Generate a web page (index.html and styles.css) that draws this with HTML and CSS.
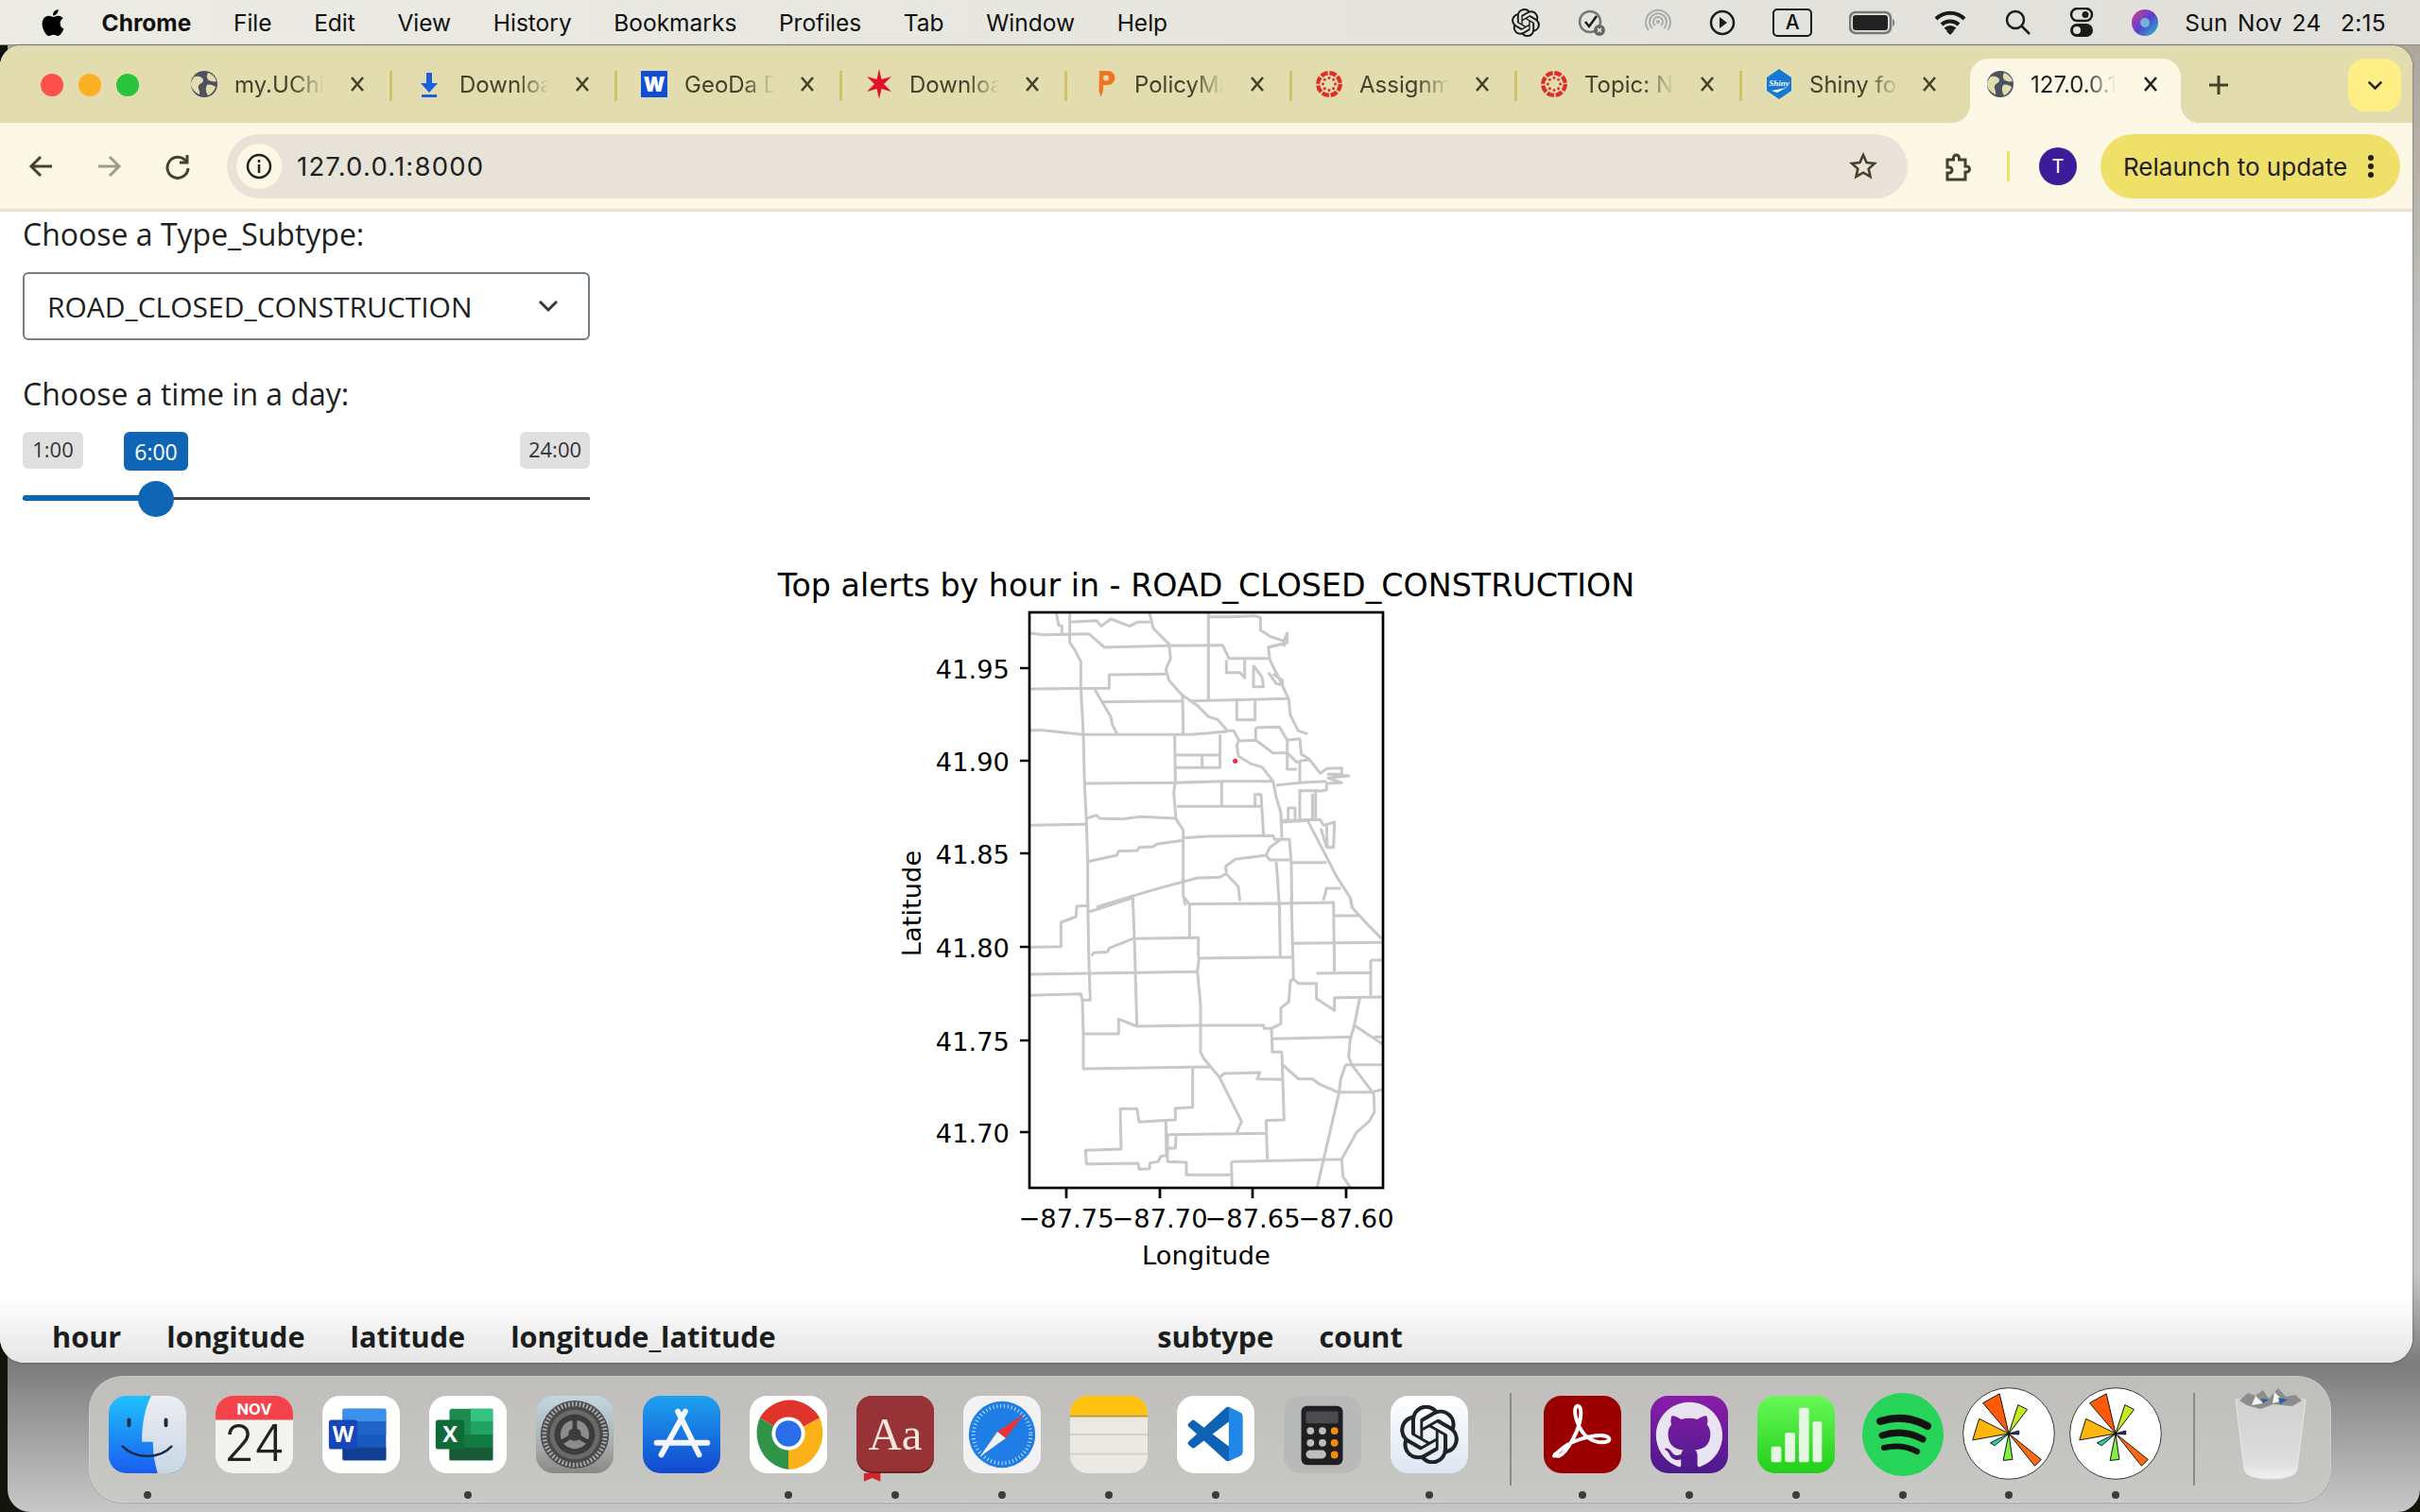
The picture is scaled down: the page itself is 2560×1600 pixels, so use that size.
FILE: index.html
```html
<!DOCTYPE html>
<html lang="en">
<head>
<meta charset="utf-8">
<title>127.0.0.1:8000</title>
<link rel="stylesheet" href="styles.css">
</head>
<body>
<div class="screen">
  <div class="backdrop"></div>
  <header class="menubar">
    <div class="menu-left">
      <svg class="apple" viewBox="0 0 24 24"><path d="M12.152 6.896c-.948 0-2.415-1.078-3.96-1.04-2.04.027-3.91 1.183-4.961 3.014-2.117 3.675-.546 9.103 1.519 12.09 1.013 1.454 2.208 3.09 3.792 3.039 1.52-.065 2.09-.987 3.935-.987 1.831 0 2.35.987 3.96.948 1.637-.026 2.676-1.48 3.676-2.948 1.156-1.688 1.636-3.325 1.662-3.415-.039-.013-3.182-1.221-3.22-4.857-.026-3.04 2.48-4.494 2.597-4.559-1.429-2.09-3.623-2.324-4.39-2.376-2-.156-3.675 1.09-4.61 1.09zM15.53 3.83c.843-1.012 1.4-2.427 1.245-3.83-1.207.052-2.662.805-3.532 1.818-.78.896-1.454 2.338-1.273 3.714 1.338.104 2.715-.688 3.559-1.701"/></svg>
      <span class="menu-app">Chrome</span>
      <span>File</span><span>Edit</span><span>View</span><span>History</span><span>Bookmarks</span><span>Profiles</span><span>Tab</span><span>Window</span><span>Help</span>
    </div>
    <div class="menu-right">
      <svg class="mi mi-30" viewBox="0 0 24 24"><use href="#openai"/></svg>
      <svg class="mi mi-32" viewBox="0 0 32 32"><circle cx="14" cy="15" r="11" class="mi-stroke-grey"/><path d="M9 15l4 5 8-11" class="mi-stroke"/><circle cx="24" cy="24" r="6" fill="#666"/><path d="M22 22l4 4M26 22l-4 4" stroke="#eee" stroke-width="1.5"/></svg>
      <svg class="mi mi-30" viewBox="0 0 30 32"><g class="mi-stroke-faint"><path d="M5 24a13 13 0 1 1 20 0"/><path d="M9 22a9 9 0 1 1 12 0"/><path d="M12 19a5 5 0 1 1 6 0"/></g><circle cx="15" cy="15" r="2" fill="#aaa"/></svg>
      <svg class="mi mi-28" viewBox="0 0 28 28"><circle cx="14" cy="14" r="12" class="mi-stroke"/><path d="M11 8l8 6-8 6z"/></svg>
      <div class="mi-a">A</div>
      <svg class="mi mi-50" viewBox="0 0 50 24"><rect x="1" y="1" width="43" height="22" rx="6" class="mi-stroke-grey"/><rect x="4" y="4" width="37" height="16" rx="3" fill="#222"/><path d="M46 8c3 1 3 7 0 8z" fill="#888"/></svg>
      <svg class="mi mi-36" viewBox="0 0 36 28"><path d="M3 10a21 21 0 0 1 30 0M9 16a13 13 0 0 1 18 0M13 21a7 7 0 0 1 10 0" class="mi-stroke-thick"/><path d="M14 23l4-3 4 3-4 4z"/></svg>
      <svg class="mi mi-30" viewBox="0 0 30 30"><circle cx="12" cy="12" r="9" class="mi-stroke"/><path d="M18 18l9 9" class="mi-stroke"/></svg>
      <svg class="mi mi-26" viewBox="0 0 26 32"><rect x="2" y="1" width="22" height="13" rx="6.5" class="mi-stroke"/><circle cx="17" cy="7.5" r="3.5"/><rect x="1" y="17" width="24" height="14" rx="7"/><circle cx="8" cy="24" r="4" fill="#e2e0da"/></svg>
      <svg class="mi mi-30" viewBox="0 0 30 30"><defs><linearGradient id="siri" x1="0" y1="0" x2="1" y2="1"><stop offset="0" stop-color="#e0408a"/><stop offset=".5" stop-color="#5a3fd0"/><stop offset="1" stop-color="#20c8c0"/></linearGradient></defs><circle cx="15" cy="15" r="14" fill="url(#siri)"/><circle cx="15" cy="15" r="5" fill="#7fe0e0" opacity=".7"/></svg>
      <span class="menu-clock">Sun Nov 24&nbsp;&nbsp;2:15</span>
    </div>
  </header>

  <main class="window">
    <div class="tabstrip">
      <div class="lights"><i class="light red"></i><i class="light amber"></i><i class="light green"></i></div>
      <div class="tab sep">
        <svg class="fav" viewBox="0 0 28 28"><use href="#globe"/></svg><span class="tab-title">my.UChi</span>
        <svg class="tab-x" viewBox="0 0 18 18"><use href="#xmark"/></svg>
      </div>
      <div class="tab sep">
        <svg class="fav" viewBox="0 0 28 28"><path d="M11 2h6v11h6l-9 10-9-10h6z" fill="#1a5fe0"/><rect x="6" y="25" width="16" height="3" fill="#1a5fe0"/></svg><span class="tab-title">Downloa</span>
        <svg class="tab-x" viewBox="0 0 18 18"><use href="#xmark"/></svg>
      </div>
      <div class="tab sep">
        <svg class="fav" viewBox="0 0 32 32"><rect width="32" height="32" fill="#0e4fd6"/><text x="16" y="25" class="fav-w">W</text></svg><span class="tab-title">GeoDa D</span>
        <svg class="tab-x" viewBox="0 0 18 18"><use href="#xmark"/></svg>
      </div>
      <div class="tab sep">
        <svg class="fav" viewBox="0 0 28 32"><path d="M14 0l2.5 11L27 8l-8 8 8 8-10.500-3L14 32l-2.500-11L1 24l8-8-8-8 10.500 3z" fill="#e0102c"/></svg><span class="tab-title">Downloa</span>
        <svg class="tab-x" viewBox="0 0 18 18"><use href="#xmark"/></svg>
      </div>
      <div class="tab sep">
        <svg class="fav" viewBox="0 0 28 32"><path d="M9 2h9a7 7 0 0 1 0 15h-5v6l-2.500 7-2-7z" fill="#f27420"/><circle cx="16" cy="9.500" r="3" fill="#e3dcae"/></svg><span class="tab-title">PolicyMa</span>
        <svg class="tab-x" viewBox="0 0 18 18"><use href="#xmark"/></svg>
      </div>
      <div class="tab sep">
        <svg class="fav" viewBox="0 0 32 32"><use href="#canvas"/></svg><span class="tab-title">Assignm</span>
        <svg class="tab-x" viewBox="0 0 18 18"><use href="#xmark"/></svg>
      </div>
      <div class="tab sep">
        <svg class="fav" viewBox="0 0 32 32"><use href="#canvas"/></svg><span class="tab-title">Topic: N</span>
        <svg class="tab-x" viewBox="0 0 18 18"><use href="#xmark"/></svg>
      </div>
      <div class="tab tab-last">
        <svg class="fav" viewBox="0 0 28 32"><path d="M14 0l13 9v14l-13 9-13-9V9z" fill="#1478d4"/><text x="14" y="18" class="fav-shiny">Shiny</text><path d="M6 23l15-3-9 5z" fill="#fff"/></svg><span class="tab-title">Shiny for</span>
        <svg class="tab-x" viewBox="0 0 18 18"><use href="#xmark"/></svg>
      </div>
      <div class="tab tab-active">
        <svg class="fav" viewBox="0 0 28 28"><use href="#globe"/></svg><span class="tab-title tab-title-active">127.0.0.1</span>
        <svg class="tab-x tab-x-active" viewBox="0 0 18 18"><use href="#xmark"/></svg>
      </div>
      <svg class="newtab" viewBox="0 0 22 22"><path d="M11 1v20M1 11h20"/></svg>
      <div class="tabsearch"><svg class="tabsearch-icon" viewBox="0 0 20 12"><path d="M2 2l8 8 8-8"/></svg></div>
    </div>

    <div class="toolbar">
      <svg class="tool tool-back" viewBox="0 0 28 28"><path d="M25 14H4M13 4L3 14l10 10"/></svg>
      <svg class="tool tool-fwd" viewBox="0 0 28 28"><path d="M3 14h21M15 4l10 10-10 10"/></svg>
      <svg class="tool tool-reload" viewBox="0 0 28 28"><path d="M23 9a11 11 0 1 0 2 7"/><path d="M24 2v8h-8" /></svg>
      <div class="omnibox">
        <div class="site-info"><svg class="site-info-icon" viewBox="0 0 28 28"><circle cx="14" cy="14" r="12"/><path d="M14 12v9M14 7v3"/></svg></div>
        <span class="url">127.0.0.1:8000</span>
        <svg class="star" viewBox="0 0 30 30"><path d="M15 3l3.600 8 8.400.900-6.300 5.700 1.800 8.400L15 21.700 7.500 26l1.800-8.400L3 11.900l8.400-.900z"/></svg>
      </div>
      <svg class="puzzle" viewBox="0 0 32 32"><path d="M6 9h6.500V7a3 3 0 0 1 6 0v2H25v7h1.500a3 3 0 0 1 0 6H25v8H6v-7h2a3 3 0 0 0 0-6H6z"/></svg>
      <i class="toolbar-sep"></i>
      <div class="avatar">T</div>
      <div class="relaunch"><span>Relaunch to update</span><svg class="kebab" viewBox="0 0 6 24"><circle cx="3" cy="3" r="3"/><circle cx="3" cy="12" r="3"/><circle cx="3" cy="21" r="3"/></svg></div>
    </div>

    <section class="page">
      <label class="field-label">Choose a Type_Subtype:</label>
      <div class="select"><span>ROAD_CLOSED_CONSTRUCTION</span><svg class="select-caret" viewBox="0 0 22 14"><path d="M2 2l9 9 9-9"/></svg></div>
      <label class="field-label field-label-time">Choose a time in a day:</label>
      <div class="slider">
        <span class="pill pill-min">1:00</span>
        <span class="pill pill-value">6:00</span>
        <span class="pill pill-max">24:00</span>
        <i class="track"></i><i class="track-fill"></i><i class="handle"></i>
      </div>

      <svg class="chart" viewBox="776 590 1000 770" role="img">
        <defs><clipPath id="axes"><rect x="1089" y="648" width="374" height="609"/></clipPath></defs>
        <text x="1276" y="631" class="chart-title">Top alerts by hour in - ROAD_CLOSED_CONSTRUCTION</text>
        <g clip-path="url(#axes)">
          <g transform="translate(1060 630) scale(.33333)" class="map">
            <path d="M172 55L180 95L190 97L190 125M215 55L215 150L232 175L250 210L250 290L258 440L262 600L268 720L272 850L272 990"/>
            <path d="M90 120L130 125L275 122L325 165L530 160L700 158L720 200L845 200M215 85L300 80L315 98L345 75L405 98L430 85L470 85"/>
            <path d="M468 55L480 105L530 155L535 200L520 235L530 270L570 315L620 350L655 385L685 395L715 430L735 430L752 460L745 475L750 510L790 535L825 545L860 590L870 640L885 690L888 770"/>
            <path d="M655 55L655 330M655 68L730 68L800 65L820 70L820 110L850 130L895 145L905 120L905 150L845 165L850 205L880 265L910 330L915 380L940 430L970 440"/>
            <path d="M845 165L885 155L900 160M90 297L340 295L340 252L520 250M295 300L345 385L350 410L365 440M320 338L570 335M573 315L575 440"/>
            <path d="M90 428L130 428L255 442L600 442L715 432M600 335L910 328M745 335L745 395L803 395L803 335"/>
            <path d="M548 445L550 590L545 625L552 710L575 745L575 950L582 985M552 507L690 507M552 547L692 547M692 442L692 550M635 510L635 545"/>
            <path d="M262 597L550 595L700 590L860 590M697 595L697 668M555 670L820 670M803 668L803 632L822 632L830 760"/>
            <path d="M90 730L265 727M268 708L300 698L310 708L380 710L440 703L550 708M272 845L365 825L370 812L430 810L435 800L480 798L490 790L575 778"/>
            <path d="M575 770L650 765L860 763L865 775L912 775L918 850L920 990M885 775L850 800L838 825L850 840L915 840M838 825L740 838L710 860L712 885L750 925L755 970"/>
            <path d="M710 885L690 895L620 897L480 935L330 980L300 990M415 960L415 990M870 845L875 905L880 985M918 848L1030 848"/>
            <path d="M888 720L970 715L1040 850L1060 890L1105 960L1112 990M1020 968L1030 930L1075 930"/>
            <path d="M805 420L880 418L905 460M805 420L805 460L860 500L905 500M755 462L805 460M905 460L905 552L935 552M905 460L945 455L950 505L975 520L1010 565L1030 550L1078 548L1078 568L1035 568L1100 573L1035 580L1078 595L1030 597L1030 618L1005 622"/>
            <path d="M905 500L935 530L950 525L975 522M945 525L945 590M870 603L945 595L1030 590M945 615L945 712M985 630L985 712M945 620L1005 620M995 625L995 712M908 712L908 675L930 675L930 712"/>
            <path d="M888 715L1010 712L1020 730L1055 720L1052 800L1032 800L1030 730M1012 740L1030 800M712 205L712 245L755 245L770 262L770 205M798 222L798 290L830 290L825 260L798 222M845 245L870 280L890 285L890 270L860 250"/>
          </g>
          <g transform="translate(1060 950) scale(.33333)" class="map">
            <path d="M272 0L275 180L280 325L255 325L250 305L90 310M90 157L187 155L187 78L235 60L237 27L272 25M275 45L415 0M415 0L420 130L428 405"/>
            <path d="M285 185L290 175L335 172L340 160L415 130L525 128L623 127L623 190M90 243L425 238L620 235M580 0L595 22L595 125"/>
            <path d="M595 20L880 18L1052 15L1055 235M880 18L883 185M918 0L925 255L915 265M623 192L920 188M625 192L620 235L630 340L630 490L640 510L690 570L760 710L745 745"/>
            <path d="M925 145L1208 142M1055 57L1135 57M1105 0L1110 30L1165 90L1205 130"/>
            <path d="M255 325L258 432L370 432L370 385L428 408L630 405L830 405L832 415L855 415L885 400L885 350L910 330L915 265L925 258L940 272L998 272L998 320L1055 358L1055 317L1208 315M998 240L1170 238M1170 198L1208 198M1170 198L1170 310"/>
            <path d="M258 432L258 543L660 537M605 540L605 665L550 668L550 705L495 708L435 712L428 670L375 670L378 798L265 802L268 845L432 843L435 862L468 860L470 842L495 838L505 820L522 818L520 708M525 752L835 748M525 752L525 838L585 840L585 880L725 880M525 795L550 795L552 757"/>
            <path d="M855 415L858 490L888 490L895 705L838 707L842 830M728 838L1078 830L1125 745L1165 710L1182 680L1180 625L1170 610L1110 530L1100 505L1105 450L1118 405L1135 320"/>
            <path d="M690 570L705 558L818 555L810 575L890 577M858 448L1112 442M1118 405L1208 465M1180 442L1208 442"/>
            <path d="M890 530L940 575L985 575L1010 593L1065 617L1175 617L1208 608M1090 530L1208 530M1090 530L1075 575L1070 617L1000 920M1078 830L1082 885L1105 920M728 838L730 920"/>
          </g>
          <circle cx="1306.700" cy="805.300" r="2.600" class="dot"/>
        </g>
        <rect x="1089" y="648" width="374" height="609" class="axes-box"/>
        <path class="ticks" d="M1079 707h10M1079 805h10M1079 903h10M1079 1002h10M1079 1101h10M1079 1198h10M1128 1257v11M1227 1257v11M1325 1257v11M1424 1257v11"/>
        <text x="1068" y="717.500" class="tick tick-y">41.95</text>
        <text x="1068" y="815.500" class="tick tick-y">41.90</text>
        <text x="1068" y="913.500" class="tick tick-y">41.85</text>
        <text x="1068" y="1012.500" class="tick tick-y">41.80</text>
        <text x="1068" y="1111.500" class="tick tick-y">41.75</text>
        <text x="1068" y="1209" class="tick tick-y">41.70</text>
        <text x="1128" y="1299" class="tick tick-x">−87.75</text>
        <text x="1227" y="1299" class="tick tick-x">−87.70</text>
        <text x="1325" y="1299" class="tick tick-x">−87.65</text>
        <text x="1424" y="1299" class="tick tick-x">−87.60</text>
        <text x="1276" y="1338" class="tick tick-x">Longitude</text>
        <text transform="translate(974 956) rotate(-90)" class="tick tick-x">Latitude</text>
      </svg>

      <table class="data-table">
        <thead><tr><th>hour</th><th>longitude</th><th>latitude</th><th class="col-wide">longitude_latitude</th><th>subtype</th><th>count</th></tr></thead>
      </table>
      <div class="page-fade"></div>
    </section>
  </main>

  <footer class="dock">
    <div class="dock-item on">
      <svg class="dock-icon" viewBox="0 0 84 84"><defs><linearGradient id="fb" x1="0" y1="0" x2="0" y2="1"><stop offset="0" stop-color="#1fc2fe"/><stop offset="1" stop-color="#1a5cf0"/></linearGradient><linearGradient id="fw" x1="0" y1="0" x2="0" y2="1"><stop offset="0" stop-color="#eceef2"/><stop offset="1" stop-color="#c8d6e6"/></linearGradient></defs><rect width="84" height="84" rx="19" fill="url(#fb)"/><path d="M46 0h19a19 19 0 0 1 19 19v46a19 19 0 0 1-19 19H53c-3-11-5-20-5-34H36c0-20 3-36 10-50z" fill="url(#fw)"/><rect x="20" y="24" width="4" height="10" rx="2" fill="#1c2a44"/><rect x="60" y="24" width="4" height="10" rx="2" fill="#1c2a44"/><path d="M15 55c14 14 40 14 53 0" fill="none" stroke="#1c2a44" stroke-width="2.500" stroke-linecap="round"/></svg><i class="dock-dot"></i>
    </div>
    <div class="dock-item">
      <svg class="dock-icon" viewBox="0 0 84 84"><rect width="84" height="84" rx="19" fill="#f5f3ef"/><path d="M0 26V19A19 19 0 0 1 19 0h46a19 19 0 0 1 19 19v7z" fill="#f4434a"/><text x="42" y="20" class="cal-month">NOV</text><text x="42" y="71" class="cal-day">24</text></svg><i class="dock-dot off"></i>
    </div>
    <div class="dock-item">
      <svg class="dock-icon" viewBox="0 0 84 84"><rect width="84" height="84" rx="19" fill="#fff"/><rect x="22" y="14" width="47" height="56" rx="3" fill="#185abd"/><rect x="22" y="14" width="47" height="14" fill="#3a90ea"/><rect x="22" y="28" width="47" height="14" fill="#2064c8"/><rect x="22" y="56" width="47" height="14" fill="#103f91"/><rect x="7" y="26" width="31" height="32" rx="3" fill="#1646b8"/><text x="22.500" y="50" class="app-letter">W</text></svg><i class="dock-dot off"></i>
    </div>
    <div class="dock-item on">
      <svg class="dock-icon" viewBox="0 0 84 84"><rect width="84" height="84" rx="19" fill="#fff"/><rect x="22" y="14" width="47" height="56" rx="3" fill="#1e8a50"/><rect x="45" y="14" width="24" height="14" fill="#33c481"/><rect x="45" y="28" width="24" height="14" fill="#21a366"/><rect x="22" y="42" width="47" height="14" fill="#107c41"/><rect x="22" y="56" width="47" height="14" fill="#185c37"/><rect x="7" y="26" width="31" height="32" rx="3" fill="#0f6b3a"/><text x="22.500" y="50" class="app-letter">X</text></svg><i class="dock-dot"></i>
    </div>
    <div class="dock-item">
      <svg class="dock-icon" viewBox="0 0 84 84"><defs><linearGradient id="sg" x1="0" y1="0" x2="0" y2="1"><stop offset="0" stop-color="#c3d7df"/><stop offset=".6" stop-color="#aab0b2"/><stop offset="1" stop-color="#8a8883"/></linearGradient></defs><rect width="84" height="84" rx="19" fill="url(#sg)"/><circle cx="42" cy="42" r="37" fill="#4a4a4c"/><circle cx="42" cy="42" r="33" fill="none" stroke="#a8a8a8" stroke-width="5" stroke-dasharray="2 2"/><circle cx="42" cy="42" r="27" fill="#6a6a6c"/><circle cx="42" cy="42" r="22" fill="#3c3c3e"/><path d="M42 42L42 24A18 18 0 0 1 57.600 51zM42 42L57.600 51A18 18 0 0 1 26.400 51zM42 42L26.400 51A18 18 0 0 1 42 24z" fill="#8c8c8c" stroke="#3c3c3e" stroke-width="5"/><circle cx="42" cy="42" r="7" fill="#3c3c3e"/></svg><i class="dock-dot off"></i>
    </div>
    <div class="dock-item">
      <svg class="dock-icon" viewBox="0 0 84 84"><defs><linearGradient id="ag" x1="0" y1="0" x2="0" y2="1"><stop offset="0" stop-color="#1ea2f0"/><stop offset="1" stop-color="#1248d0"/></linearGradient></defs><rect width="84" height="84" rx="19" fill="url(#ag)"/><path d="M38 17L61 64M46 17L20 64M15 51h55" stroke="#fff" stroke-opacity=".95" stroke-width="6" stroke-linecap="round"/></svg><i class="dock-dot off"></i>
    </div>
    <div class="dock-item on">
      <svg class="dock-icon" viewBox="0 0 84 84"><rect width="84" height="84" rx="19" fill="#fff"/><path d="M42 42L11 24A38 40 0 0 1 76 24z" fill="#e0332a"/><path d="M42 42L76 24A38 40 0 0 1 42 80z" fill="#fbb118"/><path d="M42 42L42 80A38 40 0 0 1 11 24z" fill="#2f9445"/><circle cx="42" cy="41" r="18" fill="#fff"/><circle cx="42" cy="41" r="14" fill="#2a6fe8"/></svg><i class="dock-dot"></i>
    </div>
    <div class="dock-item on">
      <svg class="dock-icon" viewBox="0 0 84 84"><rect width="84" height="84" rx="17" fill="#6e1f22"/><rect width="84" height="82" rx="17" fill="#973236"/><path d="M8 84h18v9l-9-4-9 4z" fill="#d0262c"/><text x="42" y="58" class="dict">Aa</text></svg><i class="dock-dot"></i>
    </div>
    <div class="dock-item on">
      <svg class="dock-icon" viewBox="0 0 84 84"><rect width="84" height="84" rx="19" fill="#f2f2f4"/><ellipse cx="42" cy="42" rx="36" ry="36" fill="#1f7ee6"/><circle cx="42" cy="42" r="31" fill="none" stroke="#cfe4fb" stroke-width="4" stroke-dasharray="1 3"/><path d="M66 20L37 39l9 7z" fill="#ee3333"/><path d="M18 66l19-27 9 7z" fill="#f2f2f2"/></svg><i class="dock-dot"></i>
    </div>
    <div class="dock-item on">
      <svg class="dock-icon" viewBox="0 0 84 84"><defs><clipPath id="nc"><rect width="84" height="84" rx="19"/></clipPath></defs><g clip-path="url(#nc)"><rect width="84" height="84" fill="#ece9e2"/><rect width="84" height="21" fill="#ffc20e"/><rect y="21" width="84" height="2" fill="#b9962c"/><rect y="41" width="84" height="2" fill="#d4d1cb"/><rect y="62" width="84" height="2" fill="#d4d1cb"/></g></svg><i class="dock-dot"></i>
    </div>
    <div class="dock-item on">
      <svg class="dock-icon" viewBox="0 0 84 84"><rect width="84" height="84" rx="19" fill="#fff"/><g transform="translate(12 12) scale(2.460)"><path d="M23.150 2.587L18.210.210a1.494 1.494 0 0 0-1.705.290l-9.460 8.630-4.120-3.128a.999.999 0 0 0-1.276.057L.327 7.261A1 1 0 0 0 .326 8.740L3.899 12 .326 15.260a1 1 0 0 0 .001 1.479L1.650 17.940a.999.999 0 0 0 1.276.057l4.120-3.128 9.460 8.630a1.492 1.492 0 0 0 1.704.290l4.942-2.377A1.500 1.500 0 0 0 24 20.060V3.939a1.500 1.500 0 0 0-.850-1.352zm-5.146 14.861L10.826 12l7.178-5.448v10.896z" fill="#0f62b4"/><path d="M18 .1l5.150 2.487A1.500 1.500 0 0 1 24 3.939V20.060a1.500 1.500 0 0 1-.85 1.352L18 23.900z" fill="#1f87e8"/></g></svg><i class="dock-dot"></i>
    </div>
    <div class="dock-item">
      <svg class="dock-icon" viewBox="0 0 84 84"><rect width="84" height="84" rx="19" fill="#b8b9b9"/><rect x="19" y="11" width="45" height="64" rx="6" fill="#1f1f22"/><rect x="24" y="17" width="35" height="13" rx="2" fill="#4c4c50"/><g fill="#bdbdbd"><circle cx="29" cy="38" r="4"/><circle cx="42" cy="38" r="4"/><circle cx="29" cy="51" r="4"/><circle cx="42" cy="51" r="4"/><rect x="24" y="59" width="22" height="9" rx="4.500"/></g><g fill="#f08c10"><circle cx="55" cy="38" r="4"/><circle cx="55" cy="51" r="4"/><circle cx="55" cy="64" r="4"/></g></svg><i class="dock-dot off"></i>
    </div>
    <div class="dock-item on">
      <svg class="dock-icon" viewBox="0 0 84 84"><defs><linearGradient id="cg" x1="0" y1="0" x2="0" y2="1"><stop offset="0" stop-color="#fff"/><stop offset="1" stop-color="#dce6f2"/></linearGradient></defs><rect width="84" height="84" rx="19" fill="url(#cg)"/><use href="#openai" x="10" y="10" width="64" height="64" fill="#1e2328"/></svg><i class="dock-dot"></i>
    </div>
    <i class="dock-sep"></i>
    <div class="dock-item on">
      <svg class="dock-icon" viewBox="0 0 84 84"><rect width="84" height="84" rx="19" fill="#9a0000"/><path d="M12 64c6 6 16-8 24-26 5-12 6-26 1-27-6 0-3 20 8 32 7 7 18 9 25 6 3-2 0-6-8-6-14 0-35 7-44 16-6 5-8 8-6 5z" fill="none" stroke="#fff" stroke-width="4"/></svg><i class="dock-dot"></i>
    </div>
    <div class="dock-item on">
      <svg class="dock-icon" viewBox="0 0 84 84"><defs><linearGradient id="gh" x1="0" y1="0" x2="0" y2="1"><stop offset="0" stop-color="#8a1da8"/><stop offset="1" stop-color="#4b1a8c"/></linearGradient></defs><rect width="84" height="84" rx="19" fill="url(#gh)"/><g transform="translate(6 6) scale(3)" fill="#e8e4f2"><path d="M12 .297c-6.630 0-12 5.373-12 12 0 5.303 3.438 9.800 8.205 11.385.600.113.820-.258.820-.577 0-.285-.010-1.040-.015-2.040-3.338.724-4.042-1.610-4.042-1.610C4.422 18.070 3.633 17.700 3.633 17.700c-1.087-.744.084-.729.084-.729 1.205.084 1.838 1.236 1.838 1.236 1.070 1.835 2.809 1.305 3.495.998.108-.776.417-1.305.760-1.605-2.665-.300-5.466-1.332-5.466-5.930 0-1.310.465-2.380 1.235-3.220-.135-.303-.540-1.523.105-3.176 0 0 1.005-.322 3.300 1.230.960-.267 1.980-.399 3-.405 1.020.006 2.040.138 3 .405 2.280-1.552 3.285-1.230 3.285-1.230.645 1.653.240 2.873.120 3.176.765.840 1.230 1.910 1.230 3.220 0 4.610-2.805 5.625-5.475 5.920.420.360.810 1.096.810 2.220 0 1.606-.015 2.896-.015 3.286 0 .315.210.690.825.570C20.565 22.092 24 17.592 24 12.297c0-6.627-5.373-12-12-12"/></g></svg><i class="dock-dot"></i>
    </div>
    <div class="dock-item on">
      <svg class="dock-icon" viewBox="0 0 84 84"><defs><linearGradient id="ng" x1="0" y1="0" x2="0" y2="1"><stop offset="0" stop-color="#68f858"/><stop offset="1" stop-color="#20cf18"/></linearGradient></defs><rect width="84" height="84" rx="19" fill="url(#ng)"/><g fill="#e4f7e0"><rect x="15" y="55" width="11" height="17" rx="2"/><rect x="30" y="40" width="11" height="32" rx="2"/><rect x="45" y="13" width="11" height="59" rx="2"/><rect x="60" y="28" width="10" height="44" rx="2"/></g></svg><i class="dock-dot"></i>
    </div>
    <div class="dock-item on">
      <svg class="dock-icon dock-icon-tall" viewBox="0 0 86 88"><ellipse cx="43" cy="44" rx="43" ry="44" fill="#25d458"/><g fill="none" stroke="#121212" stroke-linecap="round"><path d="M19 30c18-6 34-4 50 5" stroke-width="8"/><path d="M21 45c15-5 30-3 43 4" stroke-width="7"/><path d="M23 58c13-3 24-2 35 4" stroke-width="6"/></g></svg><i class="dock-dot"></i>
    </div>
    <div class="dock-item dock-item-pie on">
      <svg class="dock-icon dock-icon-pie" viewBox="0 0 100 100"><use href="#pie"/></svg><i class="dock-dot"></i>
    </div>
    <div class="dock-item dock-item-pie on">
      <svg class="dock-icon dock-icon-pie" viewBox="0 0 100 100"><use href="#pie"/></svg><i class="dock-dot"></i>
    </div>
    <i class="dock-sep dock-sep-2"></i>
    <div class="dock-item dock-item-trash">
      <svg class="dock-icon dock-icon-pie" viewBox="0 0 76 98"><defs><linearGradient id="tg" x1="0" y1="0" x2="0" y2="1"><stop offset="0" stop-color="#cfd0cf"/><stop offset=".8" stop-color="#dddedd"/><stop offset="1" stop-color="#f0f1f0"/></linearGradient></defs><path d="M1 13h74l-9 74c-1 7-14 10-28 10s-27-3-28-10z" fill="url(#tg)" stroke="#e6e6e6"/><path d="M5 14l9-8 8 3 8-6 6 9 10-11 8 9 10-2 7 6-10 6-20-2-14 5-14-4z" fill="#8c8c8c"/><path d="M22 9l8 8-12 2zM42 5l9 9-11 3z" fill="#f2f2f2"/><path d="M28 12l8 1-6 4zM46 11l10 2-8 5z" fill="#2a60a8"/></svg>
      <i class="dock-dot off"></i>
    </div>
  </footer>
</div>

<svg class="defs" aria-hidden="true">
  <symbol id="openai" viewBox="0 0 24 24"><path d="M22.2819 9.8211a5.9847 5.9847 0 0 0-.5157-4.9108 6.0462 6.0462 0 0 0-6.5098-2.9A6.0651 6.0651 0 0 0 4.9807 4.1818a5.9847 5.9847 0 0 0-3.9977 2.9 6.0462 6.0462 0 0 0 .7427 7.0966 5.98 5.98 0 0 0 .511 4.9107 6.051 6.051 0 0 0 6.5146 2.9001A5.9847 5.9847 0 0 0 13.2599 24a6.0557 6.0557 0 0 0 5.7718-4.2058 5.9894 5.9894 0 0 0 3.9977-2.9001 6.0557 6.0557 0 0 0-.7475-7.0729zm-9.022 12.6081a4.4755 4.4755 0 0 1-2.8764-1.0408l.1419-.0804 4.7783-2.7582a.7948.7948 0 0 0 .3927-.6813v-6.7369l2.02 1.1686a.071.071 0 0 1 .038.052v5.5826a4.504 4.504 0 0 1-4.4945 4.4944zm-9.6607-4.1254a4.4708 4.4708 0 0 1-.5346-3.0137l.142.0852 4.783 2.7582a.7712.7712 0 0 0 .7806 0l5.8428-3.3685v2.3324a.0804.0804 0 0 1-.0332.0615L9.74 19.9502a4.4992 4.4992 0 0 1-6.1408-1.6464zM2.3408 7.8956a4.485 4.485 0 0 1 2.3655-1.9728V11.6a.7664.7664 0 0 0 .3879.6765l5.8144 3.3543-2.0201 1.1685a.0757.0757 0 0 1-.071 0l-4.8303-2.7865A4.504 4.504 0 0 1 2.3408 7.872zm16.5963 3.8558L13.1038 8.364 15.1192 7.2a.0757.0757 0 0 1 .071 0l4.8303 2.7913a4.4944 4.4944 0 0 1-.6765 8.1042v-5.6772a.79.79 0 0 0-.407-.667zm2.0107-3.0231l-.142-.0852-4.7735-2.7818a.7759.7759 0 0 0-.7854 0L9.409 9.2297V6.8974a.0662.0662 0 0 1 .0284-.0615l4.8303-2.7866a4.4992 4.4992 0 0 1 6.6802 4.66zM8.3065 12.863l-2.02-1.1638a.0804.0804 0 0 1-.038-.0567V6.0742a4.4992 4.4992 0 0 1 7.3757-3.4537l-.142.0805L8.704 5.459a.7948.7948 0 0 0-.3927.6813zm1.0976-2.3654l2.602-1.4998 2.6069 1.4998v2.9994l-2.5974 1.4997-2.6067-1.4997Z"/></symbol>
  <symbol id="globe" viewBox="0 0 28 28"><circle cx="14" cy="14" r="14" fill="#4c5260"/><path d="M4 6c5-1 9 1 9 4s-4 3-5 6 2 5 1 9c-5-2-9-7-9-11 0-3 2-6 4-8zM18 2c4 1 8 5 9 9-3 1-6 0-8-1s-3-5-1-8zM17 15c3-1 7 0 9 2-1 4-5 8-8 9-2-3-3-8-1-11z" fill="#e3dcae"/></symbol>
  <symbol id="canvas" viewBox="0 0 32 32"><circle cx="16" cy="16" r="13.500" fill="none" stroke="#e12b26" stroke-width="5" stroke-dasharray="8.600 2"/><g fill="#e12b26"><circle cx="16" cy="8.500" r="1.700"/><circle cx="16" cy="23.500" r="1.700"/><circle cx="8.500" cy="16" r="1.700"/><circle cx="23.500" cy="16" r="1.700"/><circle cx="10.700" cy="10.700" r="1.700"/><circle cx="21.300" cy="10.700" r="1.700"/><circle cx="10.700" cy="21.300" r="1.700"/><circle cx="21.300" cy="21.300" r="1.700"/></g></symbol>
  <symbol id="xmark" viewBox="0 0 18 18"><path d="M3 2l12 14M15 2L3 16"/></symbol>
  <symbol id="pie" viewBox="0 0 100 100"><ellipse cx="50" cy="50" rx="49.300" ry="49.300" fill="#fff" stroke="#333" stroke-width="1"/><g stroke="#111" stroke-width="1" stroke-linejoin="miter"><path d="M50 50L22 17L40 7z" fill="#ff5a0a"/><path d="M50 50L60 19L70 24z" fill="#c4ea20"/><path d="M50 50L18 34L11 57z" fill="#ffb60a"/><path d="M50 50L61 47L61 51z" fill="#1a2bb0"/><path d="M50 50L30 60L35 63z" fill="#2dd4a0"/><path d="M50 50L44 79L54 78z" fill="#7ff04a"/><path d="M50 50L85 78L78 85z" fill="#ff6a10"/></g></symbol>
</svg>
</body>
</html>
```
FILE: styles.css
```css
* { box-sizing: border-box; }
html, body { margin: 0; padding: 0; }
body { width: 2560px; height: 1600px; overflow: hidden; background: #14140c; font-family: "Open Sans", sans-serif; }
.screen { position: relative; width: 2560px; height: 1600px; display: flex; flex-direction: column; }
.backdrop { position: absolute; left: 8px; right: 0; top: 48px; bottom: 0; border-radius: 0 0 24px 24px;
  background: linear-gradient(180deg, #aea79c 0, #c6c6c8 400px, #c6c6c8 1300px, #7c7c7c 1394px, #c8c8c8 1552px); }
.defs { position: absolute; width: 0; height: 0; }

/* menu bar */
.menubar { position: relative; height: 48px; flex: none; display: flex; justify-content: space-between; align-items: center;
  padding: 0 36px 0 42px; background: linear-gradient(90deg, #ecebe4, #e1dfd9); border-bottom: 1px solid #8e8c86;
  font-family: Inter, "Liberation Sans", sans-serif; font-size: 24.5px; color: #111; }
.menu-left { display: flex; align-items: center; gap: 44.6px; }
.apple { width: 28px; height: 32px; margin-right: -7px; }
.menu-app { font-weight: 700; }
.menu-right { display: flex; align-items: center; gap: 39px; }
.mi { height: 32px; fill: #1b1b1b; flex: none; }
.mi-26 { width: 26px; } .mi-28 { width: 28px; } .mi-30 { width: 30px; } .mi-32 { width: 32px; } .mi-36 { width: 36px; } .mi-50 { width: 50px; }
.mi-stroke { fill: none; stroke: #1b1b1b; stroke-width: 2.5; }
.mi-stroke-thick { fill: none; stroke: #1b1b1b; stroke-width: 4; }
.mi-stroke-grey { fill: none; stroke: #777; stroke-width: 2.5; }
.mi-stroke-faint { fill: none; stroke: #aaa; stroke-width: 2; }
.mi-a { width: 42px; height: 30px; border: 2px solid #1b1b1b; border-radius: 5px; display: flex; align-items: center; justify-content: center; font-size: 21px; font-weight: 500; }
.menu-clock { margin-left: -12px; white-space: nowrap; word-spacing: 3px; letter-spacing: .3px; }

/* window */
.window { position: relative; width: 2552px; height: 1394px; flex: none; border-radius: 22px 22px 26px 26px; overflow: hidden; background: #fff; display: flex; flex-direction: column; box-shadow: 0 0 3px rgba(0,0,0,.4); }
.tabstrip { height: 82px; flex: none; display: flex; align-items: flex-end; background: #e3dcae; position: relative; padding-bottom: 0; border-top: 2px solid #dbd6b8; }
.lights { width: 177px; height: 68px; flex: none; padding: 0 0 13px 43px; display: flex; align-items: center; gap: 16px; }
.light { width: 24px; height: 24px; border-radius: 50%; display: block; }
.red { background: #ff4f4a; } .amber { background: #fdb024; } .green { background: #28c43c; }
.tab { width: 238px; height: 68px; flex: none; display: flex; align-items: center; padding: 0 0 14px 25px; position: relative; font-family: Inter, "Liberation Sans", sans-serif; font-size: 24px; color: #45412a; }
.sep::after { content: ""; position: absolute; right: 0; top: 13px; width: 3px; height: 32px; background: #cfc36a; }
.tab-last { margin-right: 3px; }
.fav { width: 28px; height: 32px; flex: none; }
.tab-title { width: 95px; margin-left: 18px; white-space: nowrap; overflow: hidden; flex: none; -webkit-mask-image: linear-gradient(90deg, #000 65%, transparent); mask-image: linear-gradient(90deg, #000 65%, transparent); }
.tab-title-active { width: 90px; color: #1f1f1f; }
.tab-x { width: 18px; height: 18px; margin-left: 26px; flex: none; fill: none; stroke: #45412a; stroke-width: 2.6; }
.tab-last .tab-x { margin-left: 23px; }
.tab-x-active { stroke: #1f1f1f; margin-left: 28px; }
.tab-active { width: 223px; padding-left: 18px; background: #fdf7e6; border-radius: 20px 20px 0 0; }
.tab-active::before, .tab-active::after { content: ""; position: absolute; bottom: 0; width: 20px; height: 20px; }
.tab-active::before { left: -20px; background: radial-gradient(circle at 0 0, transparent 20px, #fdf7e6 20.5px); }
.tab-active::after { right: -20px; background: radial-gradient(circle at 100% 0, transparent 20px, #fdf7e6 20.5px); }
.newtab { width: 22px; height: 22px; margin: 0 0 29px 29px; fill: none; stroke: #45412a; stroke-width: 3; flex: none; }
.tabsearch { width: 56px; height: 56px; margin: 0 0 12px 126px; border-radius: 18px; background: #fdef85; display: flex; align-items: center; justify-content: center; flex: none; }
.tabsearch-icon { width: 17px; height: 12px; fill: none; stroke: #222; stroke-width: 3; }

.toolbar { height: 94px; flex: none; background: #fdf7e6; border-bottom: 3px solid #e8e0cc; display: flex; align-items: center; padding: 1px 12px 0 30px; }
.tool { width: 28px; height: 28px; flex: none; fill: none; stroke-width: 3; stroke: #45412a; }
.tool-fwd { margin-left: 43px; stroke: #a09c8a; }
.tool-reload { margin-left: 45px; }
.omnibox { width: 1778px; height: 68px; margin-left: 38px; border-radius: 34px; background: #e7e3d8; display: flex; align-items: center; padding: 0 32px 0 10px; flex: none; }
.site-info { width: 48px; height: 48px; border-radius: 50%; background: #fdf7e6; display: flex; align-items: center; justify-content: center; }
.site-info-icon { width: 28px; height: 28px; fill: none; stroke: #222; stroke-width: 2.5; }
.url { margin-left: 16px; font-family: Inter, "Liberation Sans", sans-serif; font-size: 27.5px; letter-spacing: 1.2px; color: #1f1f1f; flex: 1; }
.star { width: 30px; height: 30px; fill: none; stroke: #45412a; stroke-width: 2.6; }
.puzzle { width: 32px; height: 32px; margin-left: 36px; fill: none; stroke: #45412a; stroke-width: 3; flex: none; }
.toolbar-sep { width: 3px; height: 32px; margin-left: 37px; background: #ecdf6e; flex: none; }
.avatar { width: 40px; height: 40px; margin-left: 31px; border-radius: 50%; background: #3d1b99; color: #fff; font: 20px Inter, sans-serif; display: flex; align-items: center; justify-content: center; flex: none; }
.relaunch { width: 317px; height: 68px; margin-left: 25px; border-radius: 34px; background: #efe06a; display: flex; align-items: center; justify-content: space-between; padding: 0 28px 0 24px; font-family: Inter, "Liberation Sans", sans-serif; font-size: 26px; color: #1f1f1f; flex: none; }
.kebab { width: 6px; height: 24px; fill: #1f1f1f; }

/* page */
.page { position: relative; flex: 1; min-height: 0; overflow: hidden; padding: 1px 24px 0; background: #fff; color: #1d1f21; font-size: 32px; }
.field-label { display: block; line-height: 46px; }
.field-label-time { margin-top: 34px; }
.select { width: 600px; height: 72px; margin-top: 17px; border: 2px solid #747c86; border-radius: 6px; display: flex; align-items: center; justify-content: space-between; padding: 0 31px 0 24px; font-size: 30px; }
.select-caret { width: 22px; height: 14px; fill: none; stroke: #343a40; stroke-width: 3; }
.slider { position: relative; width: 600px; height: 90px; margin-top: 17px; }
.pill { position: absolute; top: 0; height: 39px; border-radius: 6px; background: #e0e0e0; color: #333; font-size: 22px; line-height: 36px; text-align: center; }
.pill-min { left: 0; width: 64px; }
.pill-max { right: 0; width: 74px; }
.pill-value { left: 107px; width: 68px; height: 41px; background: #0f65b5; color: #fff; font-size: 23px; line-height: 42px; }
.track { position: absolute; left: 0; right: 0; top: 69px; height: 3px; background: #444; }
.track-fill { position: absolute; left: 0; top: 67px; width: 126px; height: 6px; border-radius: 3px; background: #0f65b5; }
.handle { position: absolute; left: 122px; top: 52px; width: 38px; height: 38px; border-radius: 50%; background: #0f65b5; }

.chart { display: block; width: 1000px; height: 770px; margin: 43px 0 0 752px; font-family: "DejaVu Sans", sans-serif; }
.chart-title { font-size: 33.3px; text-anchor: middle; fill: #000; }
.map { fill: none; stroke: #c8c8c8; stroke-width: 9; stroke-linejoin: round; }
.dot { fill: #f0303c; }
.axes-box { fill: none; stroke: #000; stroke-width: 2.7; }
.ticks { fill: none; stroke: #000; stroke-width: 2.7; }
.tick { font-size: 27.3px; fill: #000; }
.tick-y { text-anchor: end; }
.tick-x { text-anchor: middle; }

.data-table { border-collapse: collapse; margin: 30px 0 0 7px; font-size: 30.7px; }
.data-table th { font-weight: 700; line-height: 48px; padding: 0 24px; text-align: left; white-space: nowrap; }
.data-table th.col-wide { width: 684px; }
.page-fade { position: absolute; left: 0; right: 0; bottom: 0; height: 70px; background: linear-gradient(180deg, rgba(0,0,0,0), rgba(0,0,0,.1)); pointer-events: none; }

/* dock */
.dock { position: relative; width: 2372px; height: 134px; margin: 14px 0 0 94px; flex: none; border-radius: 36px; background: linear-gradient(180deg, #bfbebb, #c8c8c5); box-shadow: inset 0 0 0 1px rgba(255,255,255,.2), 0 1px 1px rgba(0,0,0,.15); display: flex; align-items: flex-start; padding: 20px 0 0 21px; gap: 31px; }
.dock-item { width: 82px; flex: none; display: flex; flex-direction: column; align-items: center; position: relative; height: 110px; }
.dock-icon { width: 82px; height: 84px; display: block; overflow: visible; }
.dock-icon-tall { width: 86px; height: 88px; margin-top: -2px; flex: none; }
.dock-icon-pie { width: 100px; height: 98px; margin-top: -8px; flex: none; }
.dock-item-pie { width: 100px; margin-left: -10px; }
.dock-item-trash { width: 76px; margin-left: 11px; }
.dock-item-trash .dock-icon-pie { width: 76px; }
.dock-item-pie + .dock-item-pie { margin-left: -18px; }
.dock-dot { position: absolute; top: 102px; width: 8px; height: 8px; border-radius: 50%; background: #3c3c3c; }
.dock-dot.off { display: none; }
.dock-sep { width: 2px; height: 98px; margin: -2px 3px 0 13px; background: #8a8a88; flex: none; }
.dock-sep-2 { margin: -2px 0 0 1px; }
.cal-month { font: 700 17px Inter, sans-serif; fill: #fff; text-anchor: middle; }
.cal-day { font: 300 54px Inter, sans-serif; fill: #222; text-anchor: middle; }
.app-letter { font: 700 24px "Open Sans", sans-serif; fill: #fff; text-anchor: middle; }
.dict { font: 50px "Liberation Serif", serif; fill: #f3e6d8; text-anchor: middle; }
.fav-w { font: 900 24px Inter, sans-serif; fill: #fff; text-anchor: middle; }
.fav-shiny { font: italic 700 9px "Liberation Serif", serif; fill: #fff; text-anchor: middle; }
```
